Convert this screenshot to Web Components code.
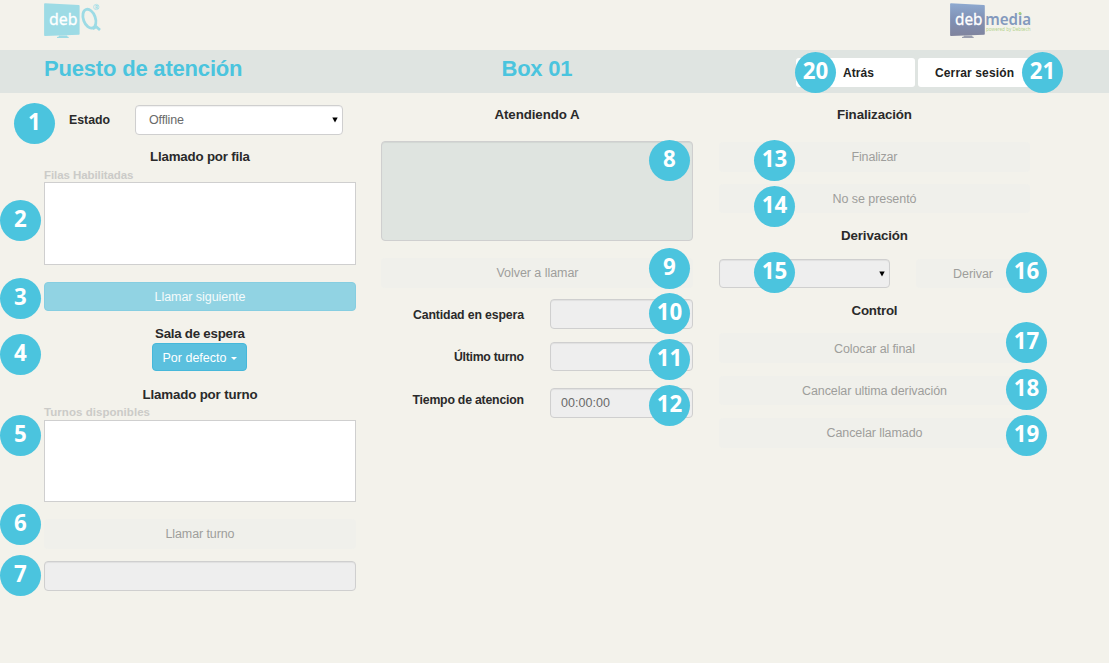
<!DOCTYPE html>
<html lang="es">
<head>
<meta charset="utf-8">
<title>Puesto de atención</title>
<style>
html,body{margin:0;height:100%;background:#f3f2eb}
body{font-family:"Liberation Sans",Arial,sans-serif;font-size:13px;color:#2b2b2b;overflow:hidden}
</style>
</head>
<body>
<attention-desk></attention-desk>
<script>
const define = (name, html, ready) => {
  const t = document.createElement('template');
  t.innerHTML = html;
  customElements.define(name, class extends HTMLElement {
    connectedCallback() {
      if (this.shadowRoot) return;
      this.attachShadow({mode: 'open'}).append(t.content.cloneNode(true));
      if (ready) ready.call(this, this.shadowRoot);
    }
  });
};

// Text run whose tracking is set so that it spans the width in "w".
define('tracked-text', `<style>:host{display:inline-block;white-space:nowrap}</style><slot></slot>`, function () {
  const w = +this.getAttribute('w'), n = this.textContent.length;
  if (!w) return;
  const natural = this.getBoundingClientRect().width;
  const ls = (w - natural) / (n - 1);
  this.style.letterSpacing = ls + 'px';
  this.style.marginRight = -ls + 'px';
});

// Numbered marker laid over a control; --x/--y are offsets in its host row.
define('step-badge', `<style>
:host{position:absolute;left:var(--x);top:var(--y);width:41px;height:41px;border-radius:50%;background:#4bc4de;color:#fff;
font:bold 22.3px/38px "Noto Sans","Open Sans",sans-serif;text-align:center;z-index:2}</style><slot></slot>`);

define('desk-row', `<style>:host{display:flex;position:relative;box-sizing:border-box;flex:none;height:var(--h,29px);margin-top:var(--mt,0);align-items:center;justify-content:var(--j,flex-start)}</style><slot></slot>`);

define('desk-heading', `<style>:host{display:block;flex:none;height:20px;line-height:20px;margin-top:var(--mt,0);text-align:center;font-weight:bold;font-size:13.3px;color:#2a2a2a}</style><slot></slot>`);

define('desk-label', `<style>:host{display:block;flex:none;font-weight:bold;font-size:12.3px;line-height:20px;color:#2a2a2a}
:host([muted]){color:#cbcbc8;height:14px;line-height:14px;font-size:11.5px;margin-top:var(--mt,0)}
:host([end]){width:143px;text-align:right;margin-right:25.5px;padding-top:1px}</style><slot></slot>`);

define('desk-button', `<style>:host{display:flex;flex:1;align-self:stretch;align-items:center;justify-content:center;box-sizing:border-box;border-radius:4px;font-size:12.5px;background:#f0f0eb;color:#9e9e9b}
:host([primary]){background:#91d3e3;border:1px solid #86cee1;color:#f5fbfc;padding-top:1px}
:host([drop]){flex:none;width:95px;background:#5bc0de;border:1px solid #46b8da;color:#fff;gap:4px;padding-top:1px}
i{display:none;border:3px solid transparent;border-top-color:#fff;border-bottom:0;margin-top:2px}
:host([drop]) i{display:block}
:host([nav]){flex:none;background:#fff;color:#222;font-weight:bold;font-size:12px}</style><slot></slot><i></i>`);

define('desk-field', `<style>:host{display:flex;flex:1;align-self:stretch;align-items:center;box-sizing:border-box;border:1px solid #cfcfcf;border-radius:4px;background:#eee;color:#6a6a6a;padding-left:10.5px;font-size:12.5px;box-shadow:inset 0 1px 1px rgba(0,0,0,.06)}
:host([white]){background:#fff;padding-left:13px}
:host([list]){background:#fff;border-radius:0;box-shadow:none}
:host([panel]){background:#dfe4e0}
svg{display:none;margin-left:auto;margin-right:4px}
:host([pick]) svg{display:block}</style><slot></slot><svg width="6" height="6" viewBox="0 0 6 6"><path d="M.3.4h5.4L3 5.6z" fill="#000"/></svg>`);

define('debq-logo', `<style>:host{display:block;width:60px;height:42px}svg{display:block}text{font-family:"Noto Sans",sans-serif}</style>
<svg width="60" height="42" viewBox="44 0 60 42">
<path d="M45 3.2L78.8 5q.8 0 .8.9v28q0 .8-.8.8L45 36.1q-.9 0-.9-.8V4q0-.8.9-.8z" fill="#9ddbe5"/>
<path d="M59 35.6h8l.4 1 1.3.5v.8H57v-.8l1.8-.5z" fill="#9ddbe5"/>
<text x="49" y="24.5" font-size="17" fill="#fff" stroke="#fff" stroke-width=".3" textLength="28.5" lengthAdjust="spacingAndGlyphs">deb</text>
<ellipse cx="89.4" cy="18.7" rx="6" ry="9.8" transform="rotate(-20 89.4 18.7)" fill="none" stroke="#9ddbe5" stroke-width="2.8"/>
<path d="M92.7 28.8L96.2 26.8L100 30" fill="none" stroke="#9ddbe5" stroke-width="2.8"/>
<circle cx="96.3" cy="7" r="2.7" fill="none" stroke="#a9dfe8" stroke-width=".8"/>
<text x="94.9" y="8.8" font-size="4.8" font-weight="bold" fill="#9ddbe5">R</text>
</svg>`);

define('debmedia-logo', `<style>:host{display:block;width:88px;height:42px}svg{display:block;overflow:visible}text{font-family:"Noto Sans",sans-serif}</style>
<svg width="88" height="42" viewBox="949 0 88 42">
<defs><linearGradient id="g" x1="0" y1="0" x2="0" y2="1"><stop offset="0" stop-color="#8eaad0"/><stop offset=".5" stop-color="#8090b4"/><stop offset="1" stop-color="#80849d"/></linearGradient></defs>
<path d="M951 3.2L984 5q.8 0 .8.9v28q0 .8-.8.8L951 36.1q-.9 0-.9-.8V4q0-.8.9-.8z" fill="url(#g)"/>
<path d="M964 35.6h8l.4 1 1.3.5v.8H962v-.8l1.8-.5z" fill="#9a9eae"/>
<text x="955" y="24.5" font-size="17" fill="#fff" stroke="#fff" stroke-width=".3" textLength="27.5" lengthAdjust="spacingAndGlyphs">deb</text>
<text x="985.2" y="25" font-size="16" font-weight="600" fill="#8399bd" textLength="46" lengthAdjust="spacingAndGlyphs">media</text>
<circle cx="1020" cy="13.4" r="1.4" fill="#a9cf7d"/>
<text x="986" y="31" font-size="4.8" fill="#b4d38e" textLength="44.5" lengthAdjust="spacingAndGlyphs">powered by Debtech</text>
</svg>`);

define('desk-header', `<style>
:host{display:block}
.logos{display:flex;justify-content:space-between;height:50px;padding:0 72px 0 44px}
.bar{display:grid;grid-template-columns:312px 312px 1fr;column-gap:25px;height:43px;padding:0 0 0 44px;background:#dfe4e1;box-sizing:border-box;font-weight:bold;font-size:22px;line-height:38px;color:#4bc4de}
.mid{text-align:center}
nav{display:flex;position:relative;gap:3px;height:43px;box-sizing:border-box;padding:8px 0 6px 78px;line-height:20px}
</style>
<div class="logos"><debq-logo></debq-logo><debmedia-logo></debmedia-logo></div>
<div class="bar"><div><tracked-text w="198.5">Puesto de atención</tracked-text></div><div class="mid"><tracked-text w="71">Box 01</tracked-text></div>
<nav><desk-button nav style="width:119px;padding-left:6px;border-radius:3px"><tracked-text w="31">Atrás</tracked-text></desk-button><desk-button nav style="width:113px;border-radius:3px"><tracked-text w="79">Cerrar sesión</tracked-text></desk-button>
<step-badge style="--x:77px;--y:1.5px">20</step-badge><step-badge style="--x:304px;--y:1.5px">21</step-badge></nav></div>`);

define('attention-desk', `<style>
:host{display:block;width:1109px;height:663px}
main{display:grid;grid-template-columns:312px 312px 311px;column-gap:25px;padding-left:44px}
section{display:flex;flex-direction:column}
section:last-child{margin:0 -1px 0 1px}
</style>
<desk-header></desk-header>
<main>
<section>
<desk-row style="--mt:12px;--h:30px"><desk-label style="padding-left:25px;width:66px"><tracked-text w="41">Estado</tracked-text></desk-label><desk-field white pick style="flex:none;width:208px"><tracked-text w="35">Offline</tracked-text></desk-field><step-badge style="--x:-30px;--y:-2.5px">1</step-badge></desk-row>
<desk-heading style="--mt:12px"><tracked-text w="100">Llamado por fila</tracked-text></desk-heading>
<desk-label muted style="--mt:1px"><tracked-text w="89.5">Filas Habilitadas</tracked-text></desk-label>
<desk-row style="--h:83px"><desk-field list></desk-field><step-badge style="--x:-44px;--y:17.5px">2</step-badge></desk-row>
<desk-row style="--mt:17px"><desk-button primary><tracked-text w="91">Llamar siguiente</tracked-text></desk-button><step-badge style="--x:-44px;--y:-4.5px">3</step-badge></desk-row>
<desk-heading style="--mt:13px"><tracked-text w="90">Sala de espera</tracked-text></desk-heading>
<desk-row style="--mt:-1px;--h:28px;--j:center"><desk-button drop style="margin-right:1px"><tracked-text w="64">Por defecto</tracked-text></desk-button><step-badge style="--x:-44px;--y:-9.5px">4</step-badge></desk-row>
<desk-heading style="--mt:14px"><tracked-text w="115">Llamado por turno</tracked-text></desk-heading>
<desk-label muted><tracked-text w="106">Turnos disponibles</tracked-text></desk-label>
<desk-row style="--mt:1px;--h:82px"><desk-field list></desk-field><step-badge style="--x:-44px;--y:-5.5px">5</step-badge></desk-row>
<desk-row style="--mt:17px;--h:30px"><desk-button style="padding-bottom:1px"><tracked-text w="69">Llamar turno</tracked-text></desk-button><step-badge style="--x:-44px;--y:-15.5px">6</step-badge></desk-row>
<desk-row style="--mt:12px;--h:30px"><desk-field></desk-field><step-badge style="--x:-44px;--y:-6.5px">7</step-badge></desk-row>
</section>
<section>
<desk-heading style="--mt:12px"><tracked-text w="85">Atendiendo A</tracked-text></desk-heading>
<desk-row style="--mt:16px;--h:100px"><desk-field panel></desk-field><step-badge style="--x:268px;--y:-1.5px">8</step-badge></desk-row>
<desk-row style="--mt:17px;--h:30px"><desk-button style="padding-bottom:1px;padding-left:1px"><tracked-text w="82">Volver a llamar</tracked-text></desk-button><step-badge style="--x:268px;--y:-10.5px">9</step-badge></desk-row>
<desk-row style="--mt:11px;--h:30px"><desk-label end><tracked-text w="111">Cantidad en espera</tracked-text></desk-label><desk-field></desk-field><step-badge style="--x:268px;--y:-6.5px">10</step-badge></desk-row>
<desk-row style="--mt:13px"><desk-label end><tracked-text w="70">Último turno</tracked-text></desk-label><desk-field></desk-field><step-badge style="--x:268px;--y:-3.5px">11</step-badge></desk-row>
<desk-row style="--mt:17px;--h:30px"><desk-label end style="padding-bottom:8px"><tracked-text w="111.5">Tiempo de atencion</tracked-text></desk-label><desk-field><tracked-text w="49">00:00:00</tracked-text></desk-field><step-badge style="--x:268px;--y:-3.5px">12</step-badge></desk-row>
</section>
<section>
<desk-heading style="--mt:12px"><tracked-text w="75">Finalización</tracked-text></desk-heading>
<desk-row style="--mt:17px;--h:30px"><desk-button><tracked-text w="46">Finalizar</tracked-text></desk-button><step-badge style="--x:35px;--y:-2.5px">13</step-badge></desk-row>
<desk-row style="--mt:12px"><desk-button><tracked-text w="84">No se presentó</tracked-text></desk-button><step-badge style="--x:35px;--y:1.5px">14</step-badge></desk-row>
<desk-heading style="--mt:13px"><tracked-text w="67">Derivación</tracked-text></desk-heading>
<desk-row style="--mt:13px"><desk-field pick style="flex:none;width:171px"></desk-field><desk-button style="margin-left:26px"><tracked-text w="40">Derivar</tracked-text></desk-button><step-badge style="--x:35px;--y:-7.5px">15</step-badge><step-badge style="--x:287px;--y:-7.5px">16</step-badge></desk-row>
<desk-heading style="--mt:13px"><tracked-text w="46">Control</tracked-text></desk-heading>
<desk-row style="--mt:12px;--h:30px"><desk-button style="padding-top:2px"><tracked-text w="81">Colocar al final</tracked-text></desk-button><step-badge style="--x:287px;--y:-11.5px">17</step-badge></desk-row>
<desk-row style="--mt:13px"><desk-button><tracked-text w="145">Cancelar ultima derivación</tracked-text></desk-button><step-badge style="--x:287px;--y:-7.5px">18</step-badge></desk-row>
<desk-row style="--mt:13px;--h:30px"><desk-button><tracked-text w="96">Cancelar llamado</tracked-text></desk-button><step-badge style="--x:287px;--y:-3.5px">19</step-badge></desk-row>
</section>
</main>`);
</script>
</body>
</html>
